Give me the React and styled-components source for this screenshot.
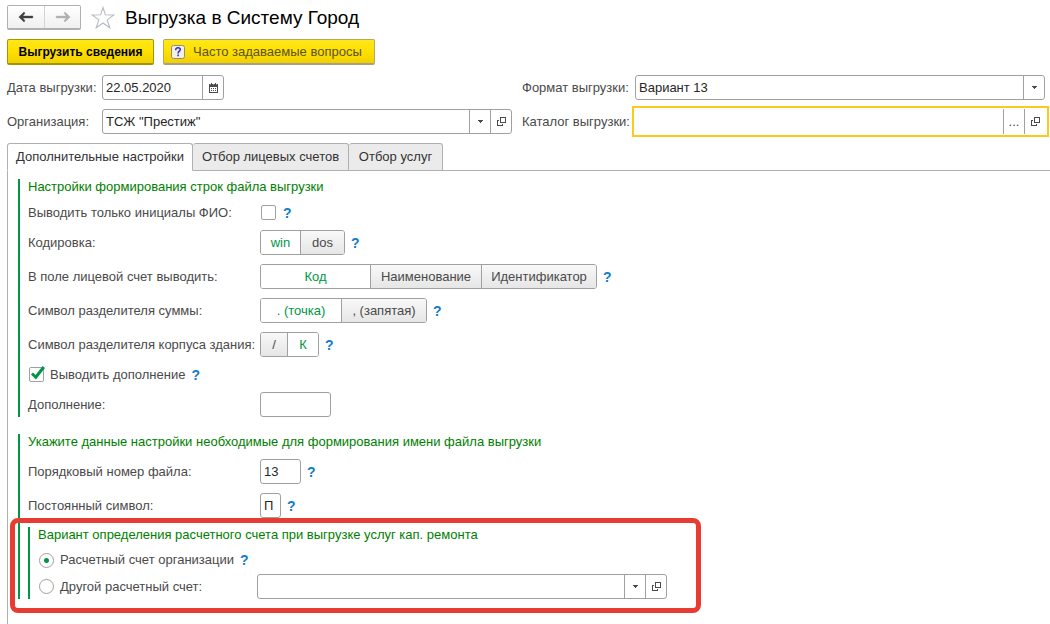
import React, { useState } from 'react';
import styled, { createGlobalStyle, css } from 'styled-components';

const GlobalStyle = createGlobalStyle`
    * {
        box-sizing: border-box;
    }
    body {
        margin: 0;
        background: #fff;
        color: #4a4a4a;
        font-family: "Liberation Sans", Arial, sans-serif;
        font-size: 13px;
        line-height: 16px;
    }
    #root {
        min-height: 100vh;
        display: flex;
    }
    button, input, select {
        font: inherit;
        color: inherit;
    }
`

/* ---------- icons ---------- */

const ArrowIcon = ({ color, flip }) => (
    <svg width="16" height="12" viewBox="0 0 16 12" aria-hidden="true">
        <path
            d="M0.8 6 L6 1 L7 2.2 L4.9 5 H14.8 V7 H4.9 L7 9.8 L6 11 Z"
            fill={color}
            stroke={color}
            strokeWidth="0.4"
            transform={flip ? 'rotate(180 8 6)' : undefined}
        />
    </svg>
)

const StarIcon = () => (
    <svg width="24" height="23" viewBox="0 0 24 23" aria-hidden="true">
        <path
            d="M12 1.5 L14.4 8.8 L22.8 9 L16.2 13.9 L18.8 21.8 L12 17 L5.2 21.8 L7.8 13.9 L1.2 9 L9.6 8.8 Z"
            fill="#fff" stroke="#b4bbc2" strokeWidth="1.1"
        />
    </svg>
)

const CalendarIcon = () => (
    <svg width="9" height="10" viewBox="0 0 9 10" aria-hidden="true" shapeRendering="crispEdges">
        <path d="M0 1h9v9H0z" fill="#4a4a4a" />
        <path d="M2 0h1v1H2zM6 0h1v1H6z" fill="#4a4a4a" />
        <path d="M1 1h1v1H1zM4 1h1v1H4zM7 1h1v1H7z" fill="#999" />
        <path d="M1 4h7v5H1z" fill="#fff" />
        <path d="M2 5h1v1H2zM4 5h1v1H4zM6 5h1v1H6zM2 7h1v1H2zM4 7h1v1H4zM6 7h1v1H6z" fill="#4a4a4a" />
    </svg>
)

const CaretIcon = () => (
    <svg width="5" height="3" viewBox="0 0 5 3" aria-hidden="true" shapeRendering="crispEdges">
        <path d="M0 0h5v1H4v1H3v1H2V2H1V1H0z" fill="#4a4a4a" />
    </svg>
)

const OpenIcon = () => (
    <svg width="9" height="9" viewBox="0 0 9 9" aria-hidden="true" shapeRendering="crispEdges">
        <path d="M3.5 0.5h5v5h-5z" fill="none" stroke="#4a4a4a" />
        <path d="M2 3.5H0.5v5h5V7" fill="none" stroke="#4a4a4a" />
    </svg>
)

const CheckMark = () => (
    <svg width="17" height="15" viewBox="0 0 17 15" aria-hidden="true" overflow="visible">
        <path d="M3 6.5 L6.8 10.2 L14.8 0" fill="none" stroke="#009646" strokeWidth="3" />
    </svg>
)

const FaqIcon = () => (
    <svg width="14" height="14" viewBox="0 0 14 14" aria-hidden="true">
        <rect x="0.5" y="0.5" width="13" height="13" rx="2" fill="#f3efe2" stroke="#8e8b80" />
        <path
            d="M4.8 5.2 V4.6 C4.8 3.4 5.6 2.8 7 2.8 C8.4 2.8 9.3 3.5 9.3 4.6 C9.3 6.1 7.1 6.3 7.1 8.4 M7.1 9.6 V11.2"
            fill="none" stroke="#2b2bc8" strokeWidth="1.5"
        />
    </svg>
)

/* ---------- header ---------- */

const Page = styled.main`
    flex: 1;
    min-width: 0;
    display: flex;
    flex-direction: column;
    padding-top: 5px;
`

const TitleBar = styled.header`
    display: flex;
    align-items: center;
    height: 25px;
    padding-left: 7px;
`

const NavButtons = styled.div`
    display: flex;
    height: 25px;
    margin-right: 10px;
    border: 1px solid #b0b0b0;
    border-bottom: 2px solid #b0b0b0;
    border-radius: 2px;
    background: linear-gradient(#fff, #f0f0f0);
`

const NavButton = styled.button`
    display: flex;
    align-items: center;
    justify-content: center;
    width: 36px;
    padding: 0;
    border: 0;
    background: none;
    & + & {
        border-left: 1px solid #d4d4d4;
    }
`

const StarButton = styled.button`
    display: flex;
    padding: 0;
    border: 0;
    background: none;
`

const Title = styled.h1`
    margin: 0 0 0 10px;
    font-size: 19px;
    line-height: 24px;
    font-weight: 400;
    color: #000;
`

const Commands = styled.div`
    display: flex;
    gap: 9px;
    padding: 9px 7px;
`

const Command = styled.button`
    display: flex;
    align-items: center;
    justify-content: ${props => (props.$primary ? 'center' : 'flex-start')};
    gap: 8px;
    width: ${props => props.$width}px;
    height: 26px;
    padding: 0 7px;
    border: 1px solid #b5a95f;
    border-bottom: 2px solid #a8a080;
    border-radius: 2px;
    background: linear-gradient(#ffe71a, #ffe000 50%, #f0d000);
    color: #5b5326;
    white-space: nowrap;
    ${props => props.$primary && css`
        border-color: #a89300;
        color: #000;
        font-size: 12px;
        font-weight: 700;
    `}
`

/* ---------- fields ---------- */

const HeadGrid = styled.div`
    display: grid;
    grid-template-columns: 505fr 523fr;
    gap: 9px 10px;
    padding: 1px 5px 0 7px;
`

const HeadRow = styled.div`
    display: flex;
    align-items: center;
    height: 25px;
`

const HeadLabel = styled.label`
    flex: none;
    width: ${props => props.$width}px;
    white-space: nowrap;
`

const Box = styled.div`
    display: flex;
    height: 25px;
    flex: ${props => (props.$width ? `0 1 ${props.$width}px` : '1')};
    min-width: 0;
    border: 1px solid #a0a0a0;
    border-radius: 3px;
    background: #fff;
    color: #262626;
    ${props => props.$active && css`
        height: 31px;
        margin: 0 -4px 0 -3px;
        padding: 1px 2px;
        border: 2px solid #fcca1d;
        border-radius: 0;
    `}
`

const Input = styled.input`
    flex: 1;
    width: 100%;
    min-width: 0;
    padding: 0 3px;
    border: 0;
    outline: 0;
    background: none;
`

const BoxButton = styled.button`
    flex: none;
    display: flex;
    align-items: center;
    justify-content: center;
    width: 21px;
    padding: 0;
    border: 0;
    border-left: 1px solid #a0a0a0;
    background: none;
    color: #4a4a4a;
`

/* ---------- tabs ---------- */

const Tabs = styled.div`
    display: flex;
    margin: 9px 0 0 7px;
    height: 28px;
    border-bottom: 1px solid #b0b0b0;
`

const Tab = styled.button`
    width: ${props => props.$width}px;
    height: 28px;
    padding: 0;
    border: 1px solid #b0b0b0;
    border-left-width: ${props => (props.$active ? 1 : 0)}px;
    border-radius: 3px 3px 0 0;
    background: ${props => (props.$active ? '#fff' : '#ebebeb')};
    border-bottom-color: ${props => (props.$active ? '#fff' : '#b0b0b0')};
    color: #333;
    white-space: nowrap;
`

const Panel = styled.section`
    flex: 1;
    display: flex;
    flex-direction: column;
    gap: 17px;
    margin-left: 7px;
    padding: 8px 10px 25px;
    border-left: 1px solid #b0b0b0;
`

const Group = styled.div`
    display: flex;
    flex-direction: column;
    gap: 9px;
    padding-left: 8px;
    border-left: 2px solid #009646;
`

const GroupTitle = styled.h2`
    margin: 0;
    font-size: 13px;
    line-height: 16px;
    font-weight: 400;
    color: #008000;
`

const Row = styled.div`
    display: flex;
    align-items: center;
    min-height: ${props => (props.$compact ? 17 : 25)}px;
`

const RowLabel = styled.label`
    flex: none;
    width: 232px;
    white-space: nowrap;
`

const Help = styled.button`
    width: 8px;
    margin-left: 6px;
    padding: 0;
    border: 0;
    background: none;
    color: #0f7cc9;
    font-size: 14px;
    font-weight: 700;
    text-align: left;
`

const Segments = styled.div`
    display: flex;
    height: 25px;
    border: 1px solid #a0a0a0;
    border-radius: 3px;
    overflow: hidden;
`

const Segment = styled.button`
    width: ${props => props.$width}px;
    padding: 0;
    border: 0;
    background: ${props => (props.$on ? '#fff' : 'linear-gradient(#f8f8f8, #e6e6e6)')};
    color: ${props => (props.$on ? '#009646' : '#4a4a4a')};
    & + & {
        border-left: 1px solid #a0a0a0;
    }
`

const Tick = styled.span`
    display: grid;
    flex: none;
    width: 15px;
    height: 15px;
    margin: 0 1px;
    > * {
        grid-area: 1 / 1;
    }
    svg {
        pointer-events: none;
    }
`

const TickInput = styled.input`
    appearance: none;
    width: 15px;
    height: 15px;
    margin: 0;
    border: 1px solid #a0a0a0;
    border-radius: ${props => (props.type === 'radio' ? '50%' : '2px')};
    background: #fff;
    &[type='radio']:checked {
        background: radial-gradient(circle, #009646 2px, #fff 3px);
    }
`

const TickLabel = styled.label`
    margin-left: 5px;
    white-space: nowrap;
`

/* ---------- highlighted nested group ---------- */

const NestedGroup = styled(Group)`
    position: relative;
    gap: 2px;
    width: 639px;
    max-width: 100%;
    ${GroupTitle} {
        margin-bottom: 3px;
    }
`

const Highlight = styled.div`
    position: absolute;
    inset: -9px -34px -14px -20px;
    border: 5px solid #e63c32;
    border-radius: 8px;
    pointer-events: none;
`

const RadioRow = styled.div`
    display: flex;
    align-items: center;
    height: ${props => (props.$field ? 25 : 24)}px;
`

const RadioSide = styled.div`
    display: flex;
    align-items: center;
    flex: none;
    width: 219px;
`

function Switch({ label, options, value }) {
    const [current, setCurrent] = useState(value)
    return (
        <Segments role="group" aria-label={label}>
            {options.map(([text, width]) => (
                <Segment
                    key={text}
                    type="button"
                    $width={width}
                    $on={text === current}
                    aria-pressed={text === current}
                    onClick={() => setCurrent(text)}
                >
                    {text}
                </Segment>
            ))}
        </Segments>
    )
}

function SwitchRow({ label, options, value }) {
    return (
        <Row>
            <RowLabel as="span">{label}</RowLabel>
            <Switch label={label} options={options} value={value} />
            <Help type="button">?</Help>
        </Row>
    )
}

function TickBox({ type = 'checkbox', ...rest }) {
    return (
        <Tick>
            <TickInput type={type} {...rest} />
            {type === 'checkbox' && rest.checked && <CheckMark />}
        </Tick>
    )
}

export default function App() {
    const [initials, setInitials] = useState(false)
    const [addition, setAddition] = useState(true)
    const [account, setAccount] = useState('own')

    return (
        <>
            <GlobalStyle />
            <Page>
                <TitleBar>
                    <NavButtons>
                        <NavButton type="button" aria-label="Назад"><ArrowIcon color="#404040" /></NavButton>
                        <NavButton type="button" aria-label="Вперед"><ArrowIcon color="#b0b0b0" flip /></NavButton>
                    </NavButtons>
                    <StarButton type="button" aria-label="Избранное"><StarIcon /></StarButton>
                    <Title>Выгрузка в Систему Город</Title>
                </TitleBar>

                <Commands>
                    <Command type="button" $primary $width={147}>Выгрузить сведения</Command>
                    <Command type="button" $width={212}><FaqIcon />Часто задаваемые вопросы</Command>
                </Commands>

                <HeadGrid>
                    <HeadRow>
                        <HeadLabel htmlFor="date" $width={95}>Дата выгрузки:</HeadLabel>
                        <Box $width={122}>
                            <Input id="date" defaultValue="22.05.2020" />
                            <BoxButton type="button" aria-label="Календарь"><CalendarIcon /></BoxButton>
                        </Box>
                    </HeadRow>
                    <HeadRow>
                        <HeadLabel htmlFor="format" $width={113}>Формат выгрузки:</HeadLabel>
                        <Box>
                            <Input id="format" defaultValue="Вариант 13" />
                            <BoxButton type="button" aria-label="Выбрать формат"><CaretIcon /></BoxButton>
                        </Box>
                    </HeadRow>
                    <HeadRow>
                        <HeadLabel htmlFor="org" $width={95}>Организация:</HeadLabel>
                        <Box>
                            <Input id="org" defaultValue={'ТСЖ "Престиж"'} />
                            <BoxButton type="button" aria-label="Выбрать организацию"><CaretIcon /></BoxButton>
                            <BoxButton type="button" aria-label="Открыть организацию"><OpenIcon /></BoxButton>
                        </Box>
                    </HeadRow>
                    <HeadRow>
                        <HeadLabel htmlFor="folder" $width={113}>Каталог выгрузки:</HeadLabel>
                        <Box $active>
                            <Input id="folder" />
                            <BoxButton type="button" aria-label="Выбрать каталог">...</BoxButton>
                            <BoxButton type="button" aria-label="Открыть каталог"><OpenIcon /></BoxButton>
                        </Box>
                    </HeadRow>
                </HeadGrid>

                <Tabs role="tablist">
                    <Tab type="button" role="tab" aria-selected="true" $active $width={186}>Дополнительные настройки</Tab>
                    <Tab type="button" role="tab" aria-selected="false" $width={156}>Отбор лицевых счетов</Tab>
                    <Tab type="button" role="tab" aria-selected="false" $width={94}>Отбор услуг</Tab>
                </Tabs>

                <Panel role="tabpanel">
                    <Group>
                        <GroupTitle>Настройки формирования строк файла выгрузки</GroupTitle>
                        <Row $compact>
                            <RowLabel htmlFor="initials">Выводить только инициалы ФИО:</RowLabel>
                            <TickBox id="initials" checked={initials} onChange={() => setInitials(!initials)} />
                            <Help type="button">?</Help>
                        </Row>
                        <SwitchRow label="Кодировка:" value="win" options={[['win', 39], ['dos', 44]]} />
                        <SwitchRow
                            label="В поле лицевой счет выводить:"
                            value="Код"
                            options={[['Код', 109], ['Наименование', 111], ['Идентификатор', 115]]}
                        />
                        <SwitchRow
                            label="Символ разделителя суммы:"
                            value=". (точка)"
                            options={[['. (точка)', 80], [', (запятая)', 85]]}
                        />
                        <SwitchRow label="Символ разделителя корпуса здания:" value="К" options={[['/', 26], ['К', 31]]} />
                        <Row $compact>
                            <TickBox id="addition" checked={addition} onChange={() => setAddition(!addition)} />
                            <TickLabel htmlFor="addition">Выводить дополнение</TickLabel>
                            <Help type="button">?</Help>
                        </Row>
                        <Row>
                            <RowLabel htmlFor="extra">Дополнение:</RowLabel>
                            <Box $width={71}><Input id="extra" /></Box>
                        </Row>
                    </Group>

                    <Group>
                        <GroupTitle>Укажите данные настройки необходимые для формирования имени файла выгрузки</GroupTitle>
                        <Row>
                            <RowLabel htmlFor="number">Порядковый номер файла:</RowLabel>
                            <Box $width={41}><Input id="number" defaultValue="13" /></Box>
                            <Help type="button">?</Help>
                        </Row>
                        <Row>
                            <RowLabel htmlFor="symbol">Постоянный символ:</RowLabel>
                            <Box $width={21}><Input id="symbol" defaultValue="П" /></Box>
                            <Help type="button">?</Help>
                        </Row>

                        <NestedGroup>
                            <GroupTitle>Вариант определения расчетного счета при выгрузке услуг кап. ремонта</GroupTitle>
                            <RadioRow>
                                <TickBox type="radio" name="account" id="own" checked={account === 'own'} onChange={() => setAccount('own')} />
                                <TickLabel htmlFor="own">Расчетный счет организации</TickLabel>
                                <Help type="button">?</Help>
                            </RadioRow>
                            <RadioRow $field>
                                <RadioSide>
                                    <TickBox type="radio" name="account" id="other" checked={account === 'other'} onChange={() => setAccount('other')} />
                                    <TickLabel htmlFor="other">Другой расчетный счет:</TickLabel>
                                </RadioSide>
                                <Box>
                                    <Input aria-label="Другой расчетный счет" />
                                    <BoxButton type="button" aria-label="Выбрать счет"><CaretIcon /></BoxButton>
                                    <BoxButton type="button" aria-label="Открыть счет"><OpenIcon /></BoxButton>
                                </Box>
                            </RadioRow>
                            <Highlight />
                        </NestedGroup>
                    </Group>
                </Panel>
            </Page>
        </>
    )
}
